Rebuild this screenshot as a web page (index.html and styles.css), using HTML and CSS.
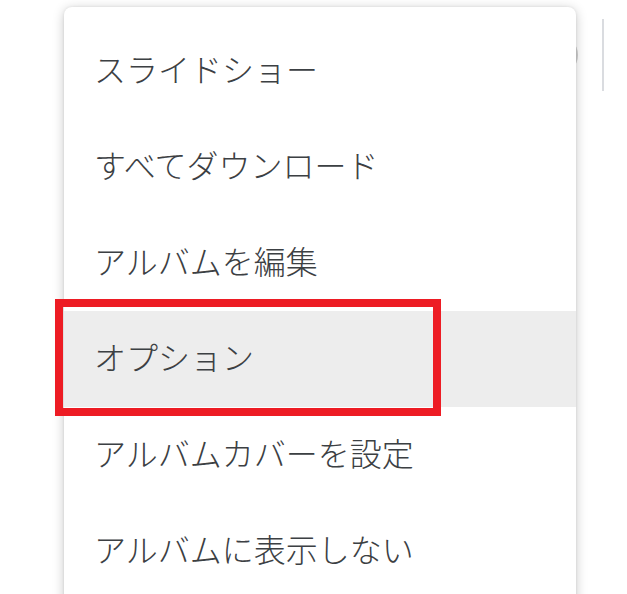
FILE: index.html
```html
<!DOCTYPE html>
<html lang="ja">
<head>
<meta charset="utf-8">
<link rel="stylesheet" href="styles.css">
</head>
<body>
<div class="page">
  <div class="toolbar-circle"></div>
  <div class="toolbar-divider"></div>
  <div class="menu">
    <div class="item">スライドショー</div>
    <div class="item">すべてダウンロード</div>
    <div class="item">アルバムを編集</div>
    <div class="item active">オプション<span class="mark"></span></div>
    <div class="item">アルバムカバーを設定</div>
    <div class="item">アルバムに表示しない</div>
  </div>
</div>
</body>
</html>
```

FILE: styles.css
```css
html, body {
  margin: 0;
  padding: 0;
  background: #ffffff;
  overflow: hidden;
}

.page {
  position: relative;
  width: 627px;
  height: 594px;
  padding: 7px 0 0 64px;
  box-sizing: border-box;
  overflow: hidden;
}

.toolbar-circle {
  position: absolute;
  left: 538px;
  top: 35px;
  width: 40px;
  height: 40px;
  border-radius: 50%;
  background: #d0d0d0;
}

.toolbar-divider {
  position: absolute;
  left: 602px;
  top: 19px;
  width: 2px;
  height: 72px;
  background: #dadce0;
}

.menu {
  position: relative;
  width: 512px;
  height: 600px;
  box-sizing: border-box;
  padding-top: 16px;
  background: #ffffff;
  border-radius: 8px 8px 0 0;
  box-shadow: 0 2px 12px rgba(0, 0, 0, 0.22), 0 0 3px rgba(0, 0, 0, 0.08);
}

.item {
  position: relative;
  height: 96px;
  box-sizing: border-box;
  display: flex;
  align-items: center;
  padding: 0 0 6px 30px;
  font-family: "Noto Sans CJK JP", "Noto Sans", sans-serif;
  font-size: 32px;
  font-weight: 300;
  color: #3c4043;
}

.item.active {
  background: #ededed;
}

.mark {
  position: absolute;
  left: -9px;
  top: -12px;
  width: 386px;
  height: 117px;
  box-sizing: border-box;
  border: 8px solid #ed1c24;
}
```
